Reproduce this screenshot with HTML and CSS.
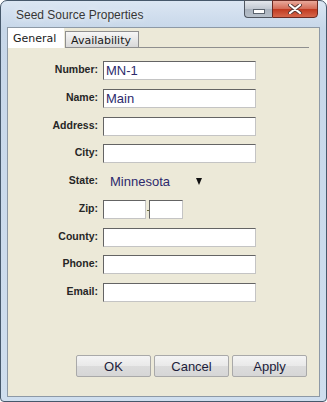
FILE: index.html
```html
<!DOCTYPE html>
<html lang="en">
<head>
    <meta charset="UTF-8">
    <title>Seed Source Properties</title>
    <link rel="stylesheet" href="styles.css">
</head>
<body>
    <div class="window">
        <!-- Title bar -->
        <div class="titlebar">
            <span class="title">Seed Source Properties</span>
            <div class="controls">
                <div class="ctl min"><span class="min-bar"></span></div>
                <div class="ctl close">
                    <svg width="14" height="10" viewBox="0 0 14 10">
                        <path d="M2 1 L12 9 M12 1 L2 9" stroke="#5b3a36" stroke-width="4" stroke-linecap="round"/>
                        <path d="M2 1 L12 9 M12 1 L2 9" stroke="#ffffff" stroke-width="2.2" stroke-linecap="round"/>
                    </svg>
                </div>
            </div>
        </div>

        <!-- Dialog body -->
        <div class="panel">
            <div class="tabs">
                <div class="tab active">General</div>
                <div class="tab">Availability</div>
                <div class="tab-fill"></div>
            </div>

            <form class="form">
                <label class="lbl">Number:</label>
                <input class="field" type="text" value="MN-1">

                <label class="lbl">Name:</label>
                <input class="field" type="text" value="Main">

                <label class="lbl">Address:</label>
                <input class="field" type="text">

                <label class="lbl">City:</label>
                <input class="field" type="text">

                <label class="lbl">State:</label>
                <div class="select">
                    <span class="select-text">Minnesota</span>
                    <span class="arrow"></span>
                </div>

                <label class="lbl">Zip:</label>
                <div class="zip">
                    <input class="field zip-a" type="text">
                    <span class="dash"></span>
                    <input class="field zip-b" type="text">
                </div>

                <label class="lbl">County:</label>
                <input class="field" type="text">

                <label class="lbl">Phone:</label>
                <input class="field" type="text">

                <label class="lbl">Email:</label>
                <input class="field" type="text">
            </form>

            <div class="buttons">
                <button type="button">OK</button>
                <button type="button">Cancel</button>
                <button type="button">Apply</button>
            </div>
        </div>
    </div>
</body>
</html>
```

FILE: styles.css
```css
:root {
    --frame-top: #dbe6f3;
    --frame-mid: #c7d7e9;
    --frame-low: #cfdeee;
    --frame-border: #46586b;
    --panel-bg: #ece9d8;
    --panel-border: #8d99a6;
    --label-color: #262626;
    --text-color: #2c2a6c;
}

body {
    margin: 0;
    font-family: 'Liberation Sans', Arial, sans-serif;
}

.window {
    width: 327px;
    height: 402px;
    box-sizing: border-box;
    border: 1px solid var(--frame-border);
    border-radius: 7px 7px 4px 4px;
    background: linear-gradient(var(--frame-top), var(--frame-mid) 28px, var(--frame-low));
    padding: 0 6px 4px 6px;
    display: flex;
    flex-direction: column;
}

/* Title bar */
.titlebar {
    height: 26px;
    display: flex;
    align-items: flex-start;
}

.title {
    margin: 7px 0 0 9px;
    font-size: 12px;
    color: #363636;
    text-shadow: 0 0 6px #ffffff;
}

.controls {
    margin-left: auto;
    margin-right: 2px;
    margin-top: -1px;
    display: flex;
}

.ctl {
    height: 18px;
    box-sizing: border-box;
    border: 1px solid #4f5660;
    display: flex;
    align-items: center;
    justify-content: center;
}

.min {
    width: 28px;
    border-right: none;
    border-radius: 0 0 0 4px;
    background: linear-gradient(#e3e7ec, #c1c8d1 50%, #a9b2bd 51%, #b7c0ca);
}

.min-bar {
    width: 10px;
    height: 3px;
    margin-top: 4px;
    background: #ffffff;
    border: 1px solid #5a636d;
}

.close {
    width: 46px;
    border-color: #6b2a22;
    border-radius: 0 0 4px 0;
    background: linear-gradient(#e9a99b, #d36a55 50%, #c0391f 51%, #d6674c);
}

/* Panel */
.panel {
    flex: 1;
    border: 1px solid var(--panel-border);
    background: var(--panel-bg);
    display: flex;
    flex-direction: column;
}

.tabs {
    display: flex;
    height: 20px;
    align-items: flex-end;
}

.tab {
    font-family: 'DejaVu Sans', sans-serif;
    font-size: 11px;
    color: #1a1a1a;
    box-sizing: border-box;
}

.tab.active {
    width: 56px;
    height: 20px;
    background: #ffffff;
    padding: 4px 0 0 5px;
}

.tab:not(.active) {
    width: 74px;
    height: 17px;
    margin-left: 1px;
    border: 1px solid #8f8f8f;
    background: linear-gradient(#f6f6f6, #d9d9d9);
    padding: 2px 0 0 5px;
}

.tab-fill {
    flex: 1;
    margin-right: 10px;
    border-bottom: 1px solid #8f8f8f;
}

/* Form */
.form {
    display: grid;
    grid-template-columns: 90px 153px;
    column-gap: 5px;
    row-gap: 8.75px;
    grid-auto-rows: 19px;
    padding-top: 13px;
}

.lbl {
    font-size: 10.5px;
    font-weight: bold;
    color: var(--label-color);
    text-align: right;
    align-self: center;
    margin-top: -3px;
}

.field {
    height: 19px;
    width: 153px;
    box-sizing: border-box;
    margin: 0;
    padding: 0 2px;
    border: 1px solid #c4c4c4;
    border-top-color: #646464;
    border-left-color: #646464;
    background: #ffffff;
    font-family: 'Liberation Sans', Arial, sans-serif;
    font-size: 13px;
    color: var(--text-color);
    outline: none;
}

.select {
    display: flex;
    align-items: center;
    padding-left: 7px;
    font-size: 13px;
    color: var(--text-color);
}

.select-text {
    width: 86px;
}

.arrow {
    width: 0;
    height: 0;
    border-left: 3.5px solid transparent;
    border-right: 3.5px solid transparent;
    border-top: 7px solid #111111;
}

.zip {
    display: flex;
    align-items: center;
}

.zip-a {
    width: 43px;
}

.zip-b {
    width: 34px;
}

.dash {
    width: 2px;
    height: 1px;
    margin: 2px 0 0 1px;
    background: #6b6b3a;
}

/* Buttons */
.buttons {
    margin-top: auto;
    display: flex;
    justify-content: flex-end;
    gap: 3px;
    padding: 0 12px 19px 0;
}

button {
    width: 75px;
    height: 22px;
    border: 1px solid #a9a9a9;
    border-radius: 2px;
    background: linear-gradient(#f4f4f4, #e9e9e9 50%, #dcdcdc 51%, #d6d6d6);
    font-family: 'Liberation Sans', Arial, sans-serif;
    font-size: 13px;
    color: #1c1c3a;
    padding: 0;
}
```
